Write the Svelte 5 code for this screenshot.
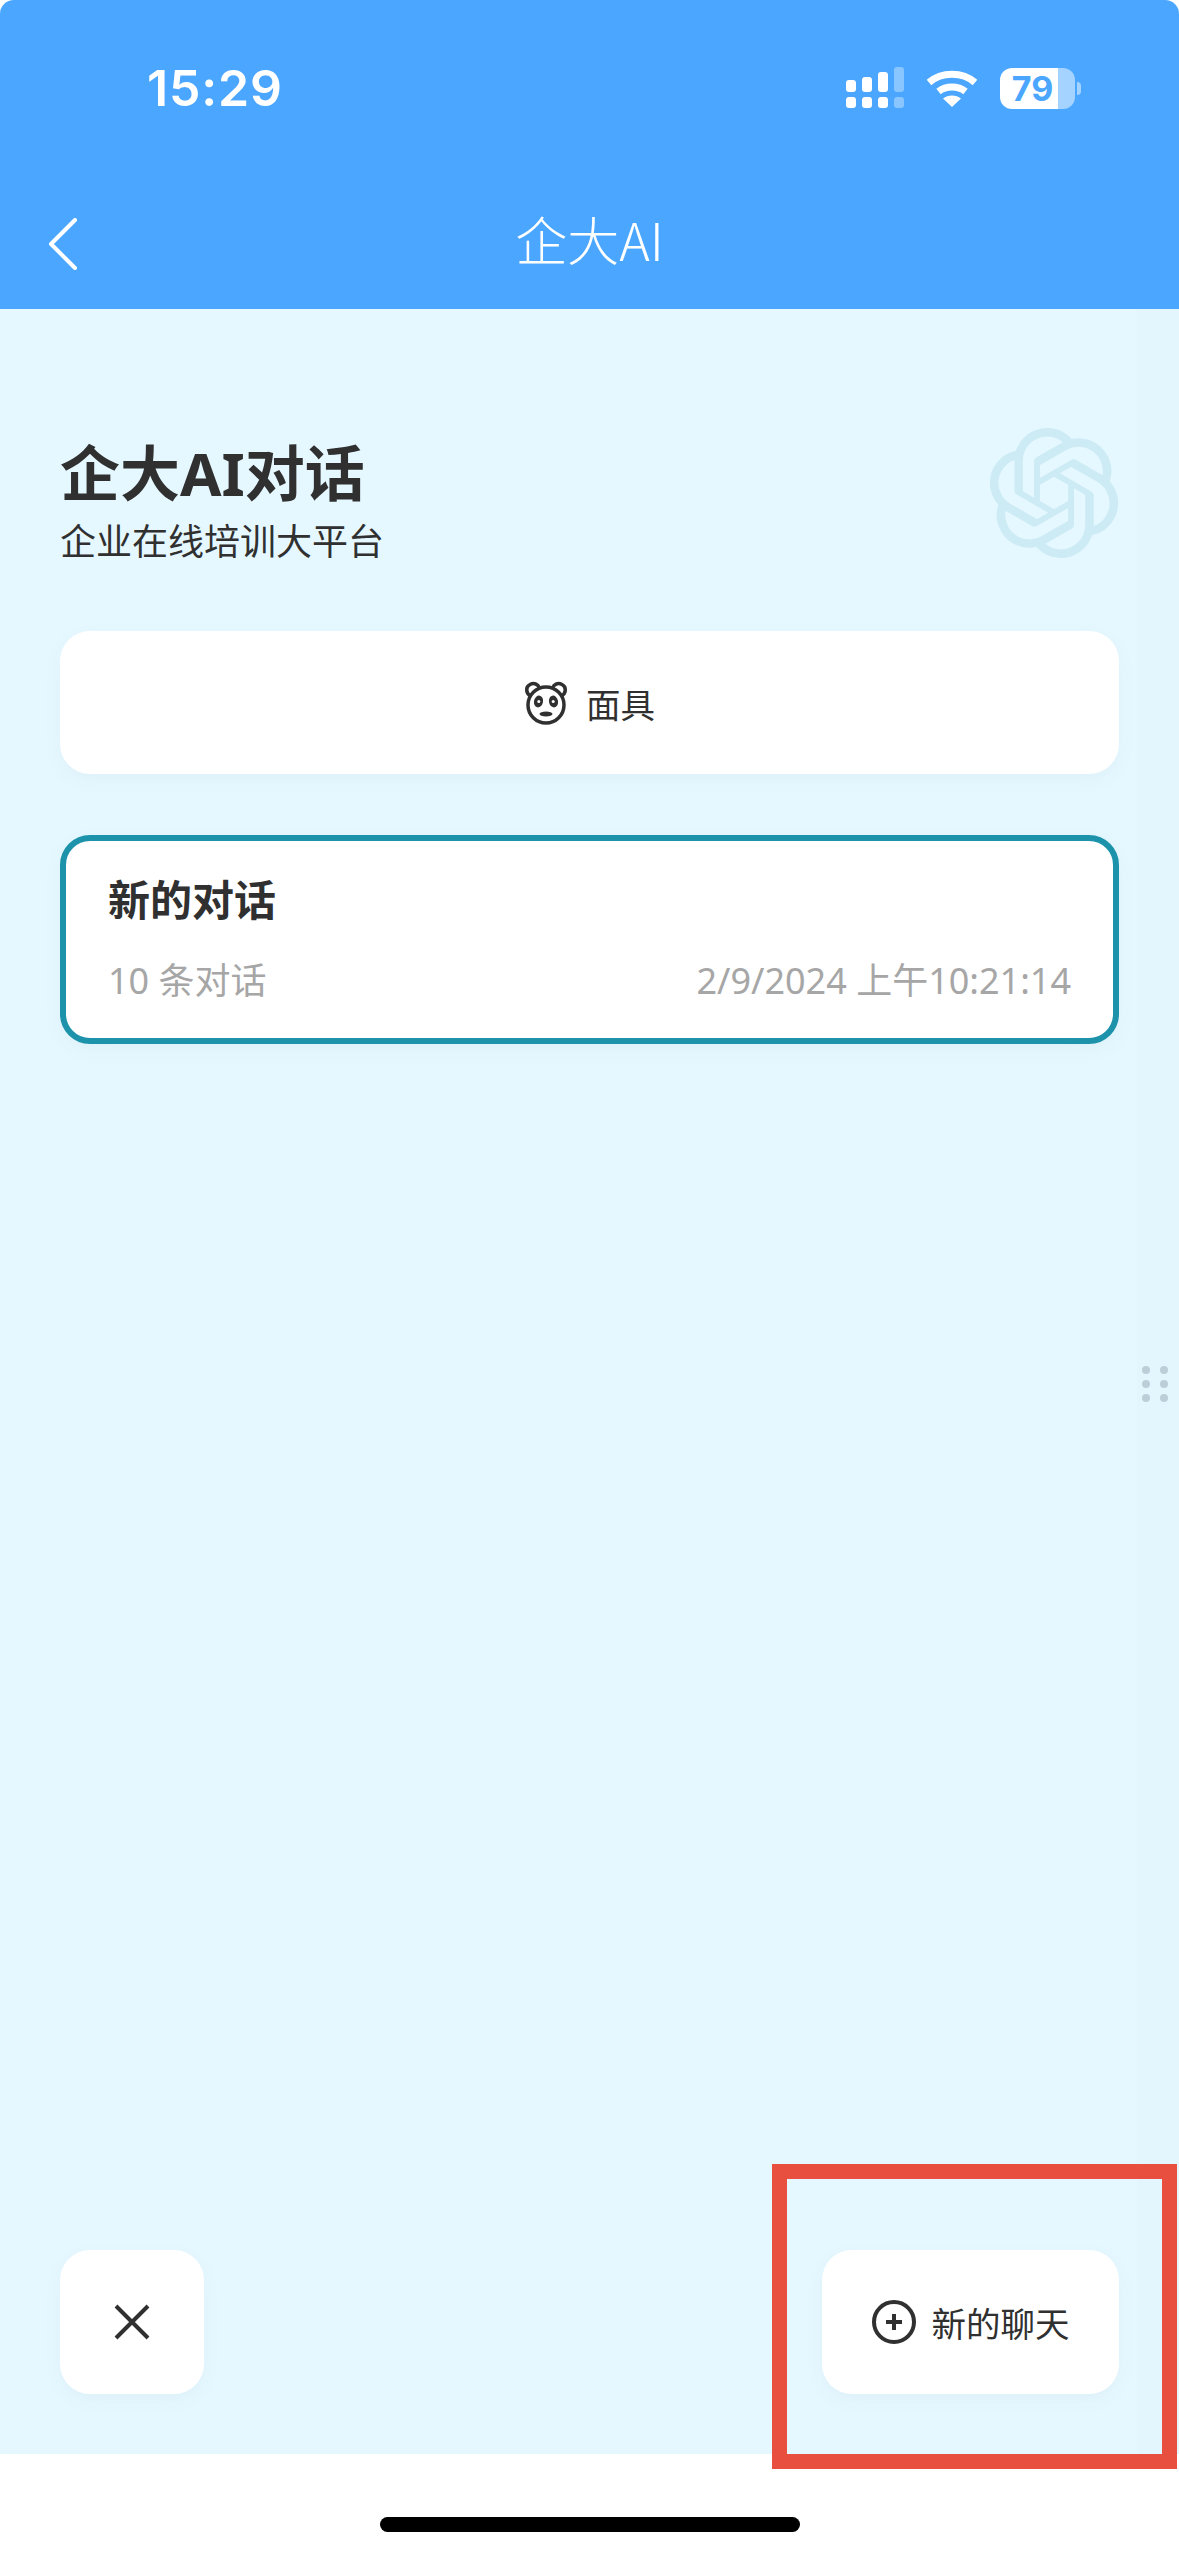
<script lang="ts">
	let chat = { title: '新的对话', count: '10 条对话', time: '2/9/2024 上午10:21:14' };
	let dots = [1, 2, 3, 4, 5, 6];
</script>

<div class="screen">
	<header class="header">
		<div class="status">
			<span class="clock">15:29</span>
			<div class="status-icons">
				<svg class="signal" width="60" height="42" viewBox="0 0 60 42" fill="#fff">
					<rect x="0" y="13" width="10" height="12" rx="3" />
					<rect x="16" y="10" width="10" height="15" rx="3" />
					<rect x="32" y="5" width="10" height="20" rx="3" />
					<rect x="48" y="0" width="10" height="25" rx="3" opacity=".35" />
					<rect x="0" y="30" width="10" height="11" rx="3" />
					<rect x="16" y="30" width="10" height="11" rx="3" />
					<rect x="32" y="30" width="10" height="11" rx="3" />
					<rect x="48" y="30" width="10" height="11" rx="3" opacity=".35" />
				</svg>
				<svg class="wifi" width="52" height="38" viewBox="0 0 52 38" fill="none" stroke="#fff" stroke-width="7">
					<path d="M3 13.5C15.500 2.500 36.500 2.500 49 13.500" />
					<path d="M12.500 22.500C20 16.500 32 16.500 39.500 22.500" />
					<path d="M17 29.500C22 25.500 30 25.500 35 29.500L26 38Z" fill="#fff" stroke="none" />
				</svg>
				<div class="battery">79</div>
				<div class="battery-tip"></div>
			</div>
		</div>
		<div class="nav">
			<svg class="back" width="30" height="52" viewBox="0 0 30 52" fill="none" stroke="#fff" stroke-width="4" stroke-linecap="round" stroke-linejoin="round">
				<path d="M27 2L3 26L27 50" />
			</svg>
			<span class="nav-title">企大AI</span>
		</div>
	</header>

	<main class="body">
		<div class="head">
			<div class="head-text">
				<h1>企大AI对话</h1>
				<p>企业在线培训大平台</p>
			</div>
			<svg class="logo" width="130" height="130" viewBox="0 0 24 24" fill="#1d93ab">
				<path d="M22.2819 9.8211a5.9847 5.9847 0 0 0-.5157-4.9108 6.0462 6.0462 0 0 0-6.5098-2.9A6.0651 6.0651 0 0 0 4.9807 4.1818a5.9847 5.9847 0 0 0-3.9977 2.9 6.0462 6.0462 0 0 0 .7427 7.0966 5.98 5.98 0 0 0 .511 4.9107 6.051 6.051 0 0 0 6.5146 2.9001A5.9847 5.9847 0 0 0 13.2599 24a6.0557 6.0557 0 0 0 5.7718-4.2058 5.9894 5.9894 0 0 0 3.9977-2.9001 6.0557 6.0557 0 0 0-.7475-7.0729zm-9.022 12.6081a4.4755 4.4755 0 0 1-2.8764-1.0408l.1419-.0804 4.7783-2.7582a.7948.7948 0 0 0 .3927-.6813v-6.7369l2.02 1.1686a.071.071 0 0 1 .038.052v5.5826a4.504 4.504 0 0 1-4.4945 4.4944zm-9.6607-4.1254a4.4708 4.4708 0 0 1-.5346-3.0137l.142.0852 4.783 2.7582a.7712.7712 0 0 0 .7806 0l5.8428-3.3685v2.3324a.0804.0804 0 0 1-.0332.0615L9.74 19.9502a4.4992 4.4992 0 0 1-6.1408-1.6464zM2.3408 7.8956a4.485 4.485 0 0 1 2.3655-1.9728V11.6a.7664.7664 0 0 0 .3879.6765l5.8144 3.3543-2.0201 1.1685a.0757.0757 0 0 1-.071 0l-4.8303-2.7865A4.504 4.504 0 0 1 2.3408 7.872zm16.5963 3.8558L13.1038 8.364 15.1192 7.2a.0757.0757 0 0 1 .071 0l4.8303 2.7913a4.4944 4.4944 0 0 1-.6765 8.1042v-5.6772a.79.79 0 0 0-.407-.667zm2.0107-3.0231l-.142-.0852-4.7735-2.7818a.7759.7759 0 0 0-.7854 0L9.409 9.2297V6.8974a.0662.0662 0 0 1 .0284-.0615l4.8303-2.7866a4.4992 4.4992 0 0 1 6.6802 4.66zM8.3065 12.863l-2.02-1.1638a.0804.0804 0 0 1-.038-.0567V6.0742a4.4992 4.4992 0 0 1 7.3757-3.4537l-.142.0805L8.704 5.459a.7948.7948 0 0 0-.3927.6813zm1.0976-2.3654l2.602-1.4998 2.6069 1.4998v2.9994l-2.5974 1.4997-2.6067-1.4997Z" />
			</svg>
		</div>

		<button class="mask">
			<svg width="44" height="44" viewBox="0 0 44 44" fill="none" stroke="#303030" stroke-width="3.500">
				<path d="M7 15C2 13 1 6 6 3.500C10 1.500 14 3 15.500 7" />
				<path d="M37 15C42 13 43 6 38 3.500C34 1.500 30 3 28.500 7" />
				<circle cx="22" cy="24" r="18" />
				<ellipse cx="14.500" cy="20.500" rx="4.500" ry="6" transform="rotate(12 14.500 20.500)" fill="#303030" stroke="none" />
				<ellipse cx="29.500" cy="20.500" rx="4.500" ry="6" transform="rotate(-12 29.500 20.500)" fill="#303030" stroke="none" />
				<circle cx="14.800" cy="20.500" r="1.500" fill="#fff" stroke="none" />
				<circle cx="29.200" cy="20.500" r="1.500" fill="#fff" stroke="none" />
				<ellipse cx="22" cy="33" rx="6.500" ry="2.500" fill="#303030" stroke="none" />
			</svg>
			<span>面具</span>
		</button>

		<div class="chat">
			<div class="chat-title">{chat.title}</div>
			<div class="chat-meta">
				<span>{chat.count}</span>
				<span>{chat.time}</span>
			</div>
		</div>

		<div class="footer">
			<button class="close" aria-label="关闭">
				<svg width="36" height="36" viewBox="0 0 36 36" stroke="#303030" stroke-width="4">
					<path d="M2 2L34 34M34 2L2 34" />
				</svg>
			</button>
			<button class="new-chat">
				<svg width="44" height="44" viewBox="0 0 44 44" fill="none" stroke="#303030" stroke-width="4">
					<circle cx="22" cy="22" r="20" />
					<path d="M14 22H30M22 14V30" />
				</svg>
				<span>新的聊天</span>
			</button>
		</div>

		<div class="drag-strip">
			<div class="handle">
				{#each dots as d (d)}
					<i></i>
				{/each}
			</div>
		</div>
	</main>

	<div class="home-area">
		<div class="home-bar"></div>
	</div>

	<div class="highlight"></div>
</div>

<style>
	:global(body) {
		margin: 0;
		background: #fff;
	}
	.screen {
		position: relative;
		width: 1179px;
		height: 2556px;
		display: flex;
		flex-direction: column;
		overflow: hidden;
		color: #303030;
		font-family: 'Noto Sans', 'Noto Sans CJK SC', sans-serif;
	}
	.header {
		height: 309px;
		flex: none;
		background: #4ba6ff;
		color: #fff;
		border-radius: 14px 14px 0 0;
	}
	.status {
		height: 176px;
		padding: 0 98px 0 147px;
		box-sizing: border-box;
		display: flex;
		align-items: center;
		justify-content: space-between;
	}
	.clock {
		font-family: Inter, sans-serif;
		font-size: 50px;
		font-weight: 600;
		letter-spacing: 0.8px;
	}
	.status-icons {
		display: flex;
		align-items: center;
	}
	.wifi {
		margin-left: 20px;
	}
	.battery {
		margin-left: 22px;
		width: 75px;
		height: 41px;
		box-sizing: border-box;
		padding-right: 10px;
		border-radius: 12px;
		background: linear-gradient(90deg, #fff 78%, rgba(255, 255, 255, 0.5) 78%);
		color: #4ba6ff;
		font-family: Inter, sans-serif;
		font-size: 34px;
		font-weight: 700;
		line-height: 41px;
		text-align: center;
	}
	.battery-tip {
		margin-left: 2px;
		width: 4px;
		height: 13px;
		border-radius: 0 6px 6px 0;
		background: rgba(255, 255, 255, 0.5);
	}
	.nav {
		height: 133px;
		display: grid;
		grid-template-columns: 1fr auto 1fr;
		align-items: center;
		padding-left: 48px;
		padding-right: 48px;
	}
	.back {
		margin-top: 3px;
	}
	.nav-title {
		font-family: 'Noto Sans CJK SC', sans-serif;
		font-size: 52px;
		font-weight: 300;
		line-height: 70px;
		margin-bottom: 8px;
	}
	.body {
		position: relative;
		flex: 1;
		display: flex;
		flex-direction: column;
		padding: 119px 60px 60px;
		box-sizing: border-box;
		background: #e6f8ff;
	}
	.head {
		display: flex;
		justify-content: space-between;
		align-items: flex-start;
	}
	.head-text {
		padding-top: 10px;
	}
	h1 {
		margin: 0;
		font-size: 60px;
		font-weight: 700;
		line-height: 70px;
	}
	p {
		margin: 6px 0 0;
		font-size: 36px;
		line-height: 56px;
	}
	.logo {
		opacity: 0.12;
		flex: none;
	}
	button {
		border: none;
		background: #fff;
		color: #303030;
		font: inherit;
		font-size: 34.5px;
		border-radius: 30px;
		box-shadow: 0 6px 20px rgba(0, 60, 100, 0.04);
		display: flex;
		align-items: center;
		justify-content: center;
		padding: 0;
	}
	.mask {
		margin-top: 61px;
		height: 143px;
		gap: 18px;
	}
	.chat {
		margin-top: 61px;
		border: 6px solid #1d93ab;
		border-radius: 30px;
		background: #fff;
		padding: 34px 42px 35px;
		box-shadow: 0 6px 20px rgba(0, 60, 100, 0.04);
	}
	.chat-title {
		font-size: 42px;
		font-weight: 700;
		line-height: 50px;
	}
	.chat-meta {
		margin-top: 34px;
		display: flex;
		justify-content: space-between;
		font-size: 36px;
		line-height: 44px;
		color: #a6a6a6;
	}
	.footer {
		margin-top: auto;
		display: flex;
		justify-content: space-between;
	}
	.close {
		width: 144px;
		height: 144px;
	}
	.new-chat {
		width: 297px;
		height: 144px;
		gap: 16px;
	}
	.drag-strip {
		position: absolute;
		top: 0;
		right: 0;
		bottom: 0;
		width: 42px;
		display: flex;
		align-items: center;
		justify-content: center;
		background: rgba(0, 90, 140, 0.01);
	}
	.handle {
		display: grid;
		grid-template-columns: 8px 8px;
		gap: 6px 10px;
		margin-top: 4px;
		margin-right: 6px;
	}
	.handle i {
		width: 8px;
		height: 8px;
		border-radius: 50%;
		background: #bccfd9;
	}
	.home-area {
		height: 102px;
		flex: none;
		display: flex;
		justify-content: center;
		align-items: flex-start;
		background: #fff;
	}
	.home-bar {
		margin-top: 63px;
		width: 420px;
		height: 15px;
		border-radius: 8px;
		background: #000;
	}
	.highlight {
		position: absolute;
		left: 772px;
		top: 2164px;
		width: 405px;
		height: 305px;
		box-sizing: border-box;
		border: 15px solid #e94f3f;
	}
</style>
